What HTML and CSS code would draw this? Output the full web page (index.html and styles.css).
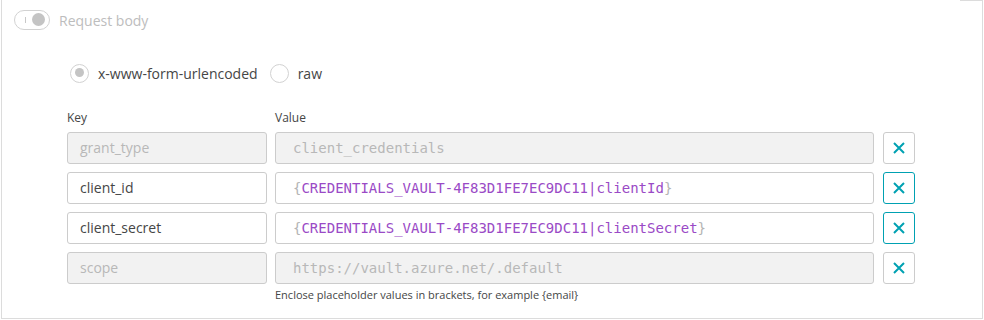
FILE: index.html
```html
<!DOCTYPE html>
<html>
<head>
  <meta charset="UTF-8">
  <title>Request body</title>
  <link rel="stylesheet" href="styles.css">
</head>
<body>
  <div class="frame">
    <div class="frame-head">
      <div class="legend">
        <span class="toggle"><span class="toggle-mark"></span><span class="toggle-knob"></span></span>
        <span class="legend-label">Request body</span>
      </div>
      <div class="frame-rule"></div>
    </div>

    <div class="frame-body">
      <div class="radios">
        <label class="radio"><span class="radio-dot checked"></span>x-www-form-urlencoded</label>
        <label class="radio"><span class="radio-dot"></span>raw</label>
      </div>

      <div class="params">
        <div class="col-label">Key</div>
        <div class="col-label">Value</div>
        <div></div>

        <div class="field disabled">grant_type</div>
        <div class="field mono disabled">client_credentials</div>
        <button class="remove"><svg width="12" height="12" viewBox="0 0 12 12"><path d="M1 1L11 11M11 1L1 11" stroke="currentColor" stroke-width="2"/></svg></button>

        <div class="field">client_id</div>
        <div class="field mono"><span class="brace">{</span><span class="ph">CREDENTIALS_VAULT-4F83D1FE7EC9DC11|clientId</span><span class="brace">}</span></div>
        <button class="remove active"><svg width="12" height="12" viewBox="0 0 12 12"><path d="M1 1L11 11M11 1L1 11" stroke="currentColor" stroke-width="2"/></svg></button>

        <div class="field">client_secret</div>
        <div class="field mono"><span class="brace">{</span><span class="ph">CREDENTIALS_VAULT-4F83D1FE7EC9DC11|clientSecret</span><span class="brace">}</span></div>
        <button class="remove active"><svg width="12" height="12" viewBox="0 0 12 12"><path d="M1 1L11 11M11 1L1 11" stroke="currentColor" stroke-width="2"/></svg></button>

        <div class="field disabled">scope</div>
        <div class="field mono disabled">https://vault.azure.net/.default</div>
        <button class="remove"><svg width="12" height="12" viewBox="0 0 12 12"><path d="M1 1L11 11M11 1L1 11" stroke="currentColor" stroke-width="2"/></svg></button>

        <div></div>
        <div class="hint">Enclose placeholder values in brackets, for example {email}</div>
        <div></div>
      </div>
    </div>
  </div>
</body>
</html>
```

FILE: styles.css
```css
body {
  margin: 0;
  font-family: 'Open Sans', sans-serif;
  color: #454646;
  background-color: white;
}
.frame {
  margin-left: 1px;
  width: 980px;
  height: 318px;
  border: 1px solid #dcdcdc;
  border-top: none;
}
.frame-head {
  display: flex;
  align-items: flex-start;
  height: 40px;
}
.legend {
  display: flex;
  align-items: center;
  gap: 9px;
  margin: 10px 0 0 12px;
}
.toggle {
  position: relative;
  width: 34px;
  height: 18px;
  border: 1px solid #d2d2d2;
  border-radius: 10px;
}
.toggle-mark {
  position: absolute;
  left: 10px;
  top: 6px;
  width: 1px;
  height: 6px;
  background-color: #c8c8c8;
}
.toggle-knob {
  position: absolute;
  right: 4px;
  top: 2px;
  width: 13px;
  height: 13px;
  border-radius: 50%;
  background-color: #c4c4c4;
}
.legend-label {
  font-size: 14px;
  color: #bdbdbd;
}
.frame-rule {
  margin-left: auto;
  width: 22px;
  border-top: 1px solid #dcdcdc;
}
.frame-body {
  padding-left: 65px;
}
.radios {
  display: flex;
  align-items: center;
  gap: 12px;
  margin: 23px 0 0 3px;
  height: 20px;
}
.radio {
  display: flex;
  align-items: center;
  gap: 9px;
  font-size: 14px;
}
.radio-dot {
  position: relative;
  box-sizing: border-box;
  width: 19px;
  height: 19px;
  border: 1.5px solid #d2d2d2;
  border-radius: 50%;
}
.radio-dot.checked::after {
  content: '';
  position: absolute;
  left: 3.5px;
  top: 3.5px;
  width: 9px;
  height: 9px;
  border-radius: 50%;
  background-color: #c4c4c4;
}
.params {
  display: grid;
  grid-template-columns: 200px 599px 32px;
  column-gap: 8px;
  row-gap: 8px;
  margin-top: 27px;
}
.col-label {
  font-size: 12px;
  line-height: 16px;
  margin: 0 0 -2px;
}
.field {
  box-sizing: border-box;
  height: 32px;
  padding: 0 12px;
  border: 1px solid #cccccc;
  border-radius: 3px;
  font-size: 14px;
  line-height: 30px;
  white-space: nowrap;
}
.field.mono {
  font-family: 'DejaVu Sans Mono', monospace;
  padding-left: 17px;
}
.field.disabled {
  background-color: #f2f2f2;
  color: #b8b8b8;
}
.brace {
  color: #b4b4b4;
}
.ph {
  color: #9a4ac6;
}
.remove {
  box-sizing: border-box;
  width: 32px;
  height: 32px;
  margin-left: 1px;
  padding: 0;
  display: flex;
  align-items: center;
  justify-content: center;
  background-color: white;
  border: 1px solid #cccccc;
  border-radius: 3px;
  color: #00a1b2;
}
.remove.active {
  border-color: #00a1b2;
}
.hint {
  font-size: 11px;
  margin-top: -5px;
}
```
